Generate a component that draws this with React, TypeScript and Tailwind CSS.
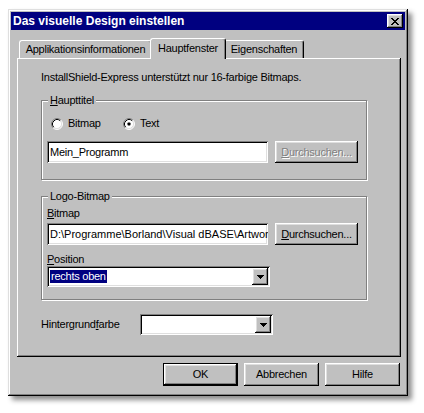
import React from "react";

// win95 bevels
const raised =
  "shadow-[inset_-1px_-1px_#000,inset_1px_1px_#fff,inset_-2px_-2px_#808080,inset_2px_2px_#dfdfdf]";
const sunken =
  "shadow-[inset_1px_1px_#808080,inset_-1px_-1px_#fff,inset_2px_2px_#000,inset_-2px_-2px_#dfdfdf]";
const tab =
  "flex justify-center bg-[#c0c0c0] border-l border-t border-r border-l-white border-t-white border-r-black rounded-t-[3px] shadow-[inset_-1px_0_#808080]";

const Radio = ({ checked }: { checked?: boolean }) => (
  <svg width="12" height="12" viewBox="0 0 12 12" className="shrink-0">
    <circle cx="6" cy="6" r="5" fill="#fff" />
    <path d="M2.11 9.89 A5.5 5.5 0 0 1 9.89 2.11" fill="none" stroke="#808080" />
    <path d="M9.89 2.11 A5.5 5.5 0 0 1 2.11 9.89" fill="none" stroke="#fff" />
    <path d="M2.82 9.18 A4.5 4.5 0 0 1 9.18 2.82" fill="none" stroke="#000" />
    <path d="M9.18 2.82 A4.5 4.5 0 0 1 2.82 9.18" fill="none" stroke="#dfdfdf" />
    {checked && <rect x="4.5" y="4.5" width="3" height="3" rx="0.8" fill="#000" />}
  </svg>
);

const Arrow = () => (
  <svg width="7" height="4" viewBox="0 0 7 4" shapeRendering="crispEdges">
    <rect x="0" y="0" width="7" height="1" fill="#000" />
    <rect x="1" y="1" width="5" height="1" fill="#000" />
    <rect x="2" y="2" width="3" height="1" fill="#000" />
    <rect x="3" y="3" width="1" height="1" fill="#000" />
  </svg>
);

const CloseGlyph = () => (
  <svg width="8" height="7" viewBox="0 0 8 7" shapeRendering="crispEdges">
    <rect x="0" y="0" width="2" height="1" fill="#000" />
    <rect x="6" y="0" width="2" height="1" fill="#000" />
    <rect x="1" y="1" width="2" height="1" fill="#000" />
    <rect x="5" y="1" width="2" height="1" fill="#000" />
    <rect x="2" y="2" width="4" height="1" fill="#000" />
    <rect x="3" y="3" width="2" height="1" fill="#000" />
    <rect x="2" y="4" width="4" height="1" fill="#000" />
    <rect x="1" y="5" width="2" height="1" fill="#000" />
    <rect x="5" y="5" width="2" height="1" fill="#000" />
    <rect x="0" y="6" width="2" height="1" fill="#000" />
    <rect x="6" y="6" width="2" height="1" fill="#000" />
  </svg>
);

const GroupBox = ({
  label,
  className,
  children,
}: {
  label: React.ReactNode;
  className: string;
  children: React.ReactNode;
}) => (
  <div
    className={`relative border border-[#808080] shadow-[inset_1px_1px_#fff,1px_1px_#fff] ${className}`}
  >
    <span className="absolute -top-[7px] left-[6px] bg-[#c0c0c0] px-[2px] leading-[13px]">
      {label}
    </span>
    {children}
  </div>
);

const Button = ({
  children,
  disabled,
  isDefault,
  className = "",
}: {
  children: React.ReactNode;
  disabled?: boolean;
  isDefault?: boolean;
  className?: string;
}) => (
  <div
    className={`${isDefault ? "border border-black" : ""} bg-[#c0c0c0] ${className}`}
  >
    <div
      className={`flex h-full w-full items-center justify-center ${raised} ${
        disabled ? "text-[#808080] [text-shadow:1px_1px_#fff]" : "text-black"
      }`}
    >
      {children}
    </div>
  </div>
);

const Combo = ({
  className,
  children,
}: {
  className: string;
  children?: React.ReactNode;
}) => (
  <div className={`flex items-center bg-white p-[2px] ${sunken} ${className}`}>
    <div className="flex flex-1 items-center pl-[1px]">{children}</div>
    <div className={`flex h-full w-[16px] items-center justify-center bg-[#c0c0c0] ${raised}`}>
      <Arrow />
    </div>
  </div>
);

export default function App() {
  return (
    <div className="h-[413px] w-[424px] overflow-hidden bg-white pl-[8px] pt-[9px] font-['Liberation_Sans',Arial,sans-serif] text-[11px] leading-[13px] tracking-[-0.25px] text-black">
      <div className="h-[387px] w-[400px] bg-[#c0c0c0] p-[3px] shadow-[inset_-1px_-1px_#000,inset_1px_1px_#dfdfdf,inset_-2px_-2px_#808080,inset_2px_2px_#fff,4px_4px_5px_rgba(0,0,0,0.45)]">
        {/* title bar */}
        <div className="flex h-[18px] items-center justify-between bg-[#000080] pl-[2px] pr-[2px]">
          <span className="text-[12px] font-bold tracking-normal text-white">
            Das visuelle Design einstellen
          </span>
          <div className={`flex h-[14px] w-[16px] items-center justify-center bg-[#c0c0c0] ${raised}`}>
            <CloseGlyph />
          </div>
        </div>

        {/* tabs */}
        <div className="relative z-10 -mb-px ml-[8px] mt-[8px] flex h-[21px] items-end">
          <div className={`${tab} mb-px h-[18px] w-[133px] pt-[2px]`}>Applikationsinformationen</div>
          <div className={`${tab} relative z-10 -mx-[2px] h-[21px] w-[76px] pt-[3px]`}>Hauptfenster</div>
          <div className={`${tab} mb-px h-[18px] w-[80px] pt-[2px]`}>Eigenschaften</div>
        </div>

        {/* panel */}
        <div className="ml-[6px] flex h-[299px] w-[384px] flex-col pl-[24px] pt-[13px] shadow-[inset_-1px_-1px_#000,inset_1px_1px_#fff,inset_-2px_-2px_#808080]">
          <div>InstallShield-Express unterstützt nur 16-farbige Bitmaps.</div>

          <GroupBox
            label={
              <>
                <u className="underline-offset-[1px]">H</u>aupttitel
              </>
            }
            className="mt-[16px] h-[80px] w-[326px] pl-[5px] pt-[16px]"
          >
            <div className="ml-[4px] flex h-[13px] items-center">
              <div className="flex w-[72px] items-center gap-[5px]">
                <Radio />
                <span>Bitmap</span>
              </div>
              <div className="flex items-center gap-[5px]">
                <Radio checked />
                <span>Text</span>
              </div>
            </div>
            <div className="mt-[11px] flex gap-[7px]">
              <div className={`flex h-[22px] w-[221px] items-center bg-white pl-[3px] ${sunken}`}>
                Mein_Programm
              </div>
              <Button disabled className="h-[22px] w-[83px]">
                <span>
                  <u className="underline-offset-[1px]">D</u>urchsuchen...
                </span>
              </Button>
            </div>
          </GroupBox>

          <GroupBox label="Logo-Bitmap" className="mt-[16px] h-[104px] w-[326px] pl-[5px] pt-[10px]">
            <div>
              <u className="underline-offset-[1px]">B</u>itmap
            </div>
            <div className="mt-[3px] flex gap-[7px]">
              <div className={`flex h-[22px] w-[221px] items-center overflow-hidden whitespace-nowrap bg-white pl-[3px] pr-[2px] tracking-normal ${sunken}`}>
                D:\Programme\Borland\Visual dBASE\Artwork
              </div>
              <Button className="h-[22px] w-[83px]">
                <span>
                  <u className="underline-offset-[1px]">D</u>urchsuchen...
                </span>
              </Button>
            </div>
            <div className="mt-[8px]">
              <u className="underline-offset-[1px]">P</u>osition
            </div>
            <Combo className="h-[21px] w-[223px]">
              <span className="bg-[#000080] px-[1px] text-white">rechts oben</span>
            </Combo>
          </GroupBox>

          <div className="mt-[14px] flex items-center">
            <span className="w-[99px]">
              Hintergrund<u className="underline-offset-[1px]">f</u>arbe
            </span>
            <Combo className="h-[21px] w-[133px]" />
          </div>
        </div>

        {/* buttons */}
        <div className="ml-[6px] mt-[6px] flex w-[384px] justify-end gap-[6px] pr-[1px]">
          <Button isDefault className="h-[23px] w-[75px]">
            OK
          </Button>
          <Button className="h-[23px] w-[75px]">Abbrechen</Button>
          <Button className="h-[23px] w-[75px]">Hilfe</Button>
        </div>
      </div>
    </div>
  );
}
